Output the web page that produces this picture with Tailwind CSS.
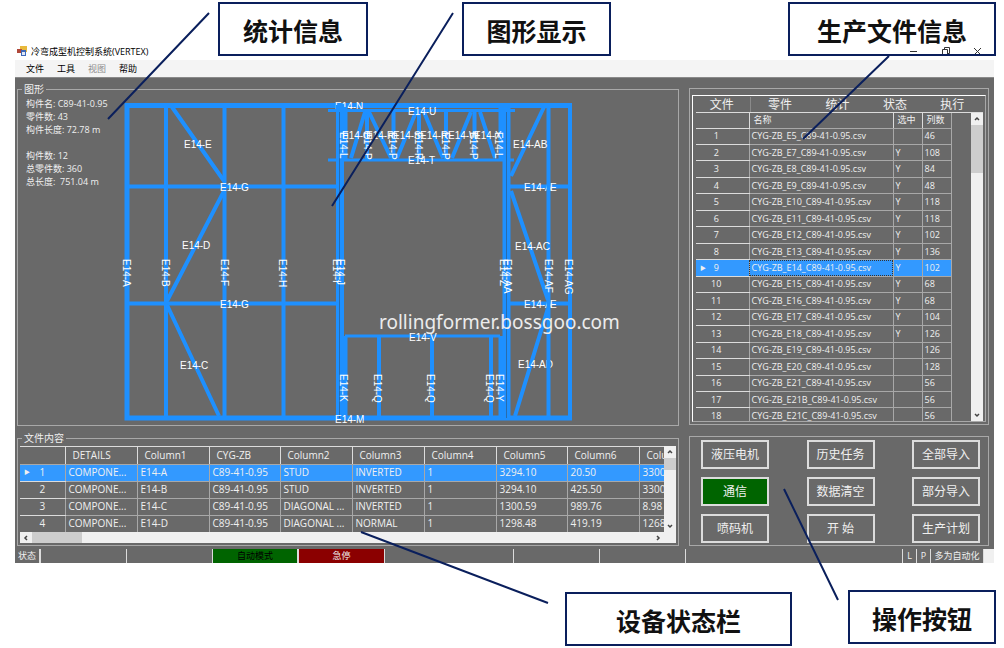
<!DOCTYPE html>
<html lang="zh-CN">
<head>
    <meta charset="UTF-8">
    <title>冷弯成型机控制系统(VERTEX)</title>
    <script src="https://cdn.jsdelivr.net/npm/@tailwindcss/browser@4"></script>
</head>
<body class="bg-white font-['Open_Sans','Noto_Sans_CJK_SC',sans-serif] text-[9px] leading-[13px]">
    <div class="relative min-h-screen overflow-hidden pt-[42px] pl-[15px] pr-[10px]">
        <!-- Window -->
        <div>
            <header class="flex h-[18px] items-center pl-[2px] pr-3">
                <svg class="mr-1 h-[10px] w-[10px]" viewBox="0 0 10 10">
                    <rect x="3" y="0" width="7" height="6" fill="#e8b93c"/>
                    <rect x="0" y="3" width="5" height="4" fill="#b0483a"/>
                    <rect x="4" y="4" width="5" height="6" fill="#3f68b8"/>
                    <rect x="5" y="6" width="3" height="3" fill="#dfe8f8"/>
                </svg>
                <h1 class="text-black">冷弯成型机控制系统(VERTEX)</h1>
                <div class="ml-auto flex gap-[23px]">
                    <button aria-label="最小化"><svg class="h-[9px] w-[9px]" viewBox="0 0 9 9" stroke="#333" fill="none"><path d="M1 4.5h7"/></svg></button>
                    <button aria-label="还原"><svg class="h-[9px] w-[9px]" viewBox="0 0 9 9" stroke="#333" fill="none"><path d="M1.5 2.5h5v6h-5zM3.500 2.500v-2h5v6h-2"/></svg></button>
                    <button aria-label="关闭"><svg class="h-[9px] w-[9px]" viewBox="0 0 9 9" stroke="#333" fill="none"><path d="M1 1l7 7M8 1l-7 7"/></svg></button>
                </div>
            </header>
            <nav class="flex h-[17px] items-center gap-[13px] bg-[#f4f4f4] pl-[11px] text-black">
                <button>文件</button>
                <button>工具</button>
                <button class="text-[#8c8c8c]">视图</button>
                <button>帮助</button>
            </nav>

            <main class="flex items-start gap-[10px] border-t border-[#8a8a8a] bg-[#696969] pt-[5px] pr-[5px] pb-[3px] pl-[2px] text-[#f0f0f0]">
                <!-- Left column -->
                <div class="flex min-w-0 flex-1 flex-col gap-[6px]">
                    <fieldset class="flex border border-[#a8a8a8]">
                        <legend class="ml-1 px-[2px] text-[10px] leading-[12px]">图形</legend>
                        <div class="w-[93px] shrink-0 whitespace-nowrap pt-[2px] pl-2">
                            <p>构件名: C89-41-0.95</p>
                            <p>零件数: 43</p>
                            <p>构件长度: 72.78 m</p>
                            <p class="mt-[13px]">构件数: 12</p>
                            <p>总零件数: 360</p>
                            <p>总长度:&nbsp; 751.04 m</p>
                        </div>
                        <svg class="h-[330px] w-[540px] shrink-0 font-['Liberation_Sans',sans-serif] text-[10px]" viewBox="111 95 540 330" fill="white">
                            <g stroke="#1e90ff" fill="none" stroke-width="4">
                                <path stroke-width="5" d="M124.500 105.500H572M127 105v313M124.500 418H572"/>
                                <path d="M166 105v313M224.500 105v313M283.500 105v313M570 105v313"/>
                                <path d="M129 186.500H337M129 303.500H337M510 186.500H570M510 303.500H570"/>
                                <path d="M172 107L224 181M224 191L167 301M167 305L219 416"/>
                                <path d="M544 107L511 176M511 191L548 300M548 308L515 416"/>
                            </g>
                            <g>
                                <text x="335" y="110">E14-N</text>
                                <text x="524" y="191">E14-A</text>
                                <text x="524" y="308">E14-A</text>
                                <text x="518" y="368">E14-AD</text>
                            </g>
                            <g stroke="#1e90ff" fill="none" stroke-width="4">
                                <path d="M548.500 105v313"/>
                                <path d="M338 105v313M342 105v313M345.500 107v53M345.500 336v82"/>
                                <path d="M504.500 105v313M508.500 105v313M500.500 107v53M500.500 336v82"/>
                                <path stroke-width="3" d="M328 110.500H515M328 160H514M345 336H500"/>
                                <path d="M367 110v50M393.500 110v50M419 110v50M446 110v50M474.500 110v50"/>
                                <path d="M351 158L365 112M369 112L391 158M397 158L416 112M424 112L443 158M452 158L471 112M480 112L495 158"/>
                                <path d="M379 336v82M432 336v82M491 336v82"/>
                                <path stroke="#2a6cab" stroke-width="1" d="M339.500 112v306M506.500 112v306"/>
                            </g>
                            <g id="beam-labels"></g>
                            <text x="379" y="329" fill="#ececec" class="font-['Noto_Sans',sans-serif] text-[19px]">rollingformer.bossgoo.com</text>
                        </svg>
                    </fieldset>

                    <fieldset class="min-w-0 border border-[#a8a8a8] px-[2px] pt-[2px] pb-[2px]">
                        <legend class="ml-[2px] px-[2px] text-[10px] leading-[12px]">文件内容</legend>
                        <div class="flex h-[86px]">
                            <div class="min-w-0 flex-1 overflow-hidden border-t border-[#dcdcdc]">
                                <table class="w-[690px] table-fixed border-collapse text-left text-[10px] leading-[13px]">
                                    <colgroup>
                                        <col class="w-[45px]"><col class="w-[72px]"><col class="w-[72px]"><col class="w-[71px]"><col class="w-[72px]"><col class="w-[72px]"><col class="w-[72px]"><col class="w-[71px]"><col class="w-[72px]"><col class="w-[71px]">
                                    </colgroup>
                                    <thead><tr id="detail-head" class="h-[17px]"></tr></thead>
                                    <tbody id="detail-table"></tbody>
                                </table>
                            </div>
                            <div class="flex w-3 flex-col items-center bg-[#f0f0f0]">
                                <svg class="h-3 w-3" viewBox="0 0 12 12" fill="none" stroke="#444" stroke-width="1.500"><path d="M4 7l2-2 2 2"/></svg>
                                <div class="h-3 w-full bg-[#cdcdcd]"></div>
                                <svg class="mt-auto h-3 w-3" viewBox="0 0 12 12" fill="none" stroke="#444" stroke-width="1.500"><path d="M4 5l2 2 2-2"/></svg>
                            </div>
                        </div>
                        <div class="flex h-[11px] items-center bg-[#f0f0f0] pr-3">
                            <svg class="h-3 w-3" viewBox="0 0 12 12" fill="none" stroke="#444" stroke-width="1.500"><path d="M7 4L5 6l2 2"/></svg>
                            <div class="h-full w-[50px] bg-[#cdcdcd]"></div>
                            <svg class="ml-auto h-3 w-3" viewBox="0 0 12 12" fill="none" stroke="#444" stroke-width="1.500"><path d="M5 4l2 2-2 2"/></svg>
                        </div>
                    </fieldset>
                </div>

                <!-- Right column -->
                <div class="flex w-[300px] shrink-0 flex-col gap-[11px] pt-[5px]">
                    <section class="border border-[#a8a8a8] px-[2px] pt-[6px] pb-[2px]">
                        <div class="border border-t-white border-r-[#a8a8a8] border-b-[#a8a8a8] border-l-white pt-px">
                            <div class="flex pr-[4px] text-[12px] leading-[15px]">
                                <button class="flex-1 border-r border-[#8a8a8a]">文件</button>
                                <button class="flex-1">零件</button>
                                <button class="flex-1">统计</button>
                                <button class="flex-1">状态</button>
                                <button class="flex-1">执行</button>
                            </div>
                            <div class="mr-[2px] ml-[3px] flex h-[309px] border-t border-[#dcdcdc]">
                                <div class="flex-1 overflow-hidden">
                                    <table class="h-[312px] w-[255px] table-fixed border-collapse text-left leading-[12px]">
                                        <colgroup><col class="w-[53px]"><col class="w-[144px]"><col class="w-[29px]"><col class="w-[29px]"></colgroup>
                                        <thead>
                                            <tr class="h-[15px]">
                                                <th class="border-r border-b border-[#dcdcdc]"></th>
                                                <th class="border-r border-b border-[#a8a8a8] border-r-[#dcdcdc] pl-1 font-normal">名称</th>
                                                <th class="border-r border-b border-[#a8a8a8] border-r-[#dcdcdc] pl-1 font-normal">选中</th>
                                                <th class="border-r border-b border-[#a8a8a8] pl-1 font-normal">列数</th>
                                            </tr>
                                        </thead>
                                        <tbody id="file-table"></tbody>
                                    </table>
                                </div>
                                <div class="flex w-3 flex-col bg-[#f0f0f0]">
                                    <svg class="h-3 w-3" viewBox="0 0 12 12" fill="none" stroke="#444" stroke-width="1.500"><path d="M4 7l2-2 2 2"/></svg>
                                    <div class="h-12 w-full bg-[#cdcdcd]"></div>
                                    <svg class="mt-auto h-3 w-3" viewBox="0 0 12 12" fill="none" stroke="#444" stroke-width="1.500"><path d="M4 5l2 2 2-2"/></svg>
                                </div>
                            </div>
                        </div>
                    </section>

                    <section class="grid grid-cols-[68px_68px_68px] justify-between gap-y-[8px] border border-[#a8a8a8] pt-[3px] pr-[8px] pb-[2px] pl-[11px] text-[12px] leading-[24px]">
                        <button class="h-[29px] border-2 border-[#dcdcdc]">液压电机</button>
                        <button class="h-[29px] border-2 border-[#dcdcdc]">历史任务</button>
                        <button class="h-[29px] border-2 border-[#dcdcdc]">全部导入</button>
                        <button class="h-[29px] border-2 border-[#dcdcdc] bg-[#006400]">通信</button>
                        <button class="h-[29px] border-2 border-[#dcdcdc]">数据清空</button>
                        <button class="h-[29px] border-2 border-[#dcdcdc]">部分导入</button>
                        <button class="h-[29px] border-2 border-[#dcdcdc]">喷码机</button>
                        <button class="h-[29px] border-2 border-[#dcdcdc]">开 始</button>
                        <button class="h-[29px] border-2 border-[#dcdcdc]">生产计划</button>
                    </section>
                </div>
            </main>

            <footer class="flex h-[14px] bg-[#696969] text-center leading-[14px] text-[#f0f0f0]">
                <span class="w-[26px] border-r-2 border-[#dcdcdc]">状态</span>
                <span class="w-[86px] border-r border-[#dcdcdc]"></span>
                <span class="w-[86px] border-r border-[#dcdcdc]"></span>
                <span class="w-[86px] border-r-2 border-[#dcdcdc] bg-[#006400] text-black">自动模式</span>
                <span class="w-[86px] border-r border-[#dcdcdc] bg-[#8b0000]">急停</span>
                <span class="w-[129px] border-r border-[#dcdcdc]"></span>
                <span class="w-[86px] border-r border-[#dcdcdc]"></span>
                <span class="w-[86px] border-r border-[#dcdcdc]"></span>
                <span class="flex-1 border-r border-[#dcdcdc]"></span>
                <span class="w-[14px] border-r border-[#dcdcdc]">L</span>
                <span class="w-[14px] border-r border-[#dcdcdc]">P</span>
                <span class="w-[53px] border-r border-[#dcdcdc]">多为自动化</span>
                <span class="w-[10px] bg-[#f0f0f0]"></span>
            </footer>
        </div>

        <!-- Callouts -->
        <svg class="pointer-events-none absolute inset-0 h-full w-full" stroke="#0a1f5c" stroke-width="2">
            <path d="M209 13L108 119M453 13L332 206M889 56L803 139M361 532L548 603M784 489L838 600"/>
        </svg>
        <div class="text-center font-['Noto_Sans_CJK_SC',sans-serif] text-[25px] leading-[52px] font-bold text-[#111]">
            <div class="absolute top-[2px] left-[218px] h-[54px] w-[150px] border-2 border-[#0a1f5c]">统计信息</div>
            <div class="absolute top-[2px] left-[462px] h-[54px] w-[149px] border-2 border-[#0a1f5c]">图形显示</div>
            <div class="absolute top-[2px] left-[788px] h-[54px] w-[208px] border-2 border-[#0a1f5c]">生产文件信息</div>
            <div class="absolute top-[592px] left-[565px] h-[54px] w-[227px] border-2 border-[#0a1f5c]">设备状态栏</div>
            <div class="absolute top-[590px] left-[848px] h-[54px] w-[148px] border-2 border-[#0a1f5c]">操作按钮</div>
        </div>
    </div>

    <script>
        // [name, selected, columns]
        const files = [
            ['E5', '', 46], ['E7', 'Y', 108], ['E8', 'Y', 84], ['E9', 'Y', 48], ['E10', 'Y', 118], ['E11', 'Y', 118],
            ['E12', 'Y', 102], ['E13', 'Y', 136], ['E14', 'Y', 102], ['E15', 'Y', 68], ['E16', 'Y', 68], ['E17', 'Y', 104],
            ['E18', 'Y', 126], ['E19', '', 126], ['E20', '', 128], ['E21', '', 56], ['E21B', '', 56], ['E21C', '', 56]
        ];
        document.getElementById('file-table').innerHTML = files.map(([name, sel, cols], i) => {
            const active = name === 'E14';
            return `
                <tr class="${active ? 'bg-[#3399ff]' : ''}">
                    <td class="relative border-r border-b border-r-[#a8a8a8] border-b-[#dcdcdc] pr-3 text-center">${active ? '<span class="absolute left-1 text-[6px]">▶</span>' : ''}<span>${i + 1}</span></td>
                    <td class="border-r border-b border-[#a8a8a8] pl-[2px] whitespace-nowrap ${active ? 'outline-1 -outline-offset-1 outline-dotted outline-[#333]' : ''}">CYG-ZB_${name}_C89-41-0.95.csv</td>
                    <td class="border-r border-b border-[#a8a8a8] pl-[2px]">${sel}</td>
                    <td class="border-r border-b border-[#a8a8a8] pl-[2px]">${cols}</td>
                </tr>`;
        }).join('');

        const heads = ['', 'DETAILS', 'Column1', 'CYG-ZB', 'Column2', 'Column3', 'Column4', 'Column5', 'Column6', 'Column7'];
        document.getElementById('detail-head').innerHTML = heads.map(h =>
            `<th class="border-r border-b border-b-[#a8a8a8] border-r-[#dcdcdc] pl-[7px] font-normal">${h}</th>`).join('');
        const details = [
            ['E14-A', 'STUD', 'INVERTED', '3294.10', '20.50', '3300.00'],
            ['E14-B', 'STUD', 'INVERTED', '3294.10', '425.50', '3300.00'],
            ['E14-C', 'DIAGONAL ...', 'INVERTED', '1300.59', '989.76', '8.98'],
            ['E14-D', 'DIAGONAL ...', 'NORMAL', '1298.48', '419.19', '1268.00'],
            ['', '', '', '', '', '']
        ];
        document.getElementById('detail-table').innerHTML = details.map((d, i) => {
            const cells = d[0] ? ['COMPONE...', d[0], 'C89-41-0.95', d[1], d[2], '1', d[3], d[4], d[5]] : Array(9).fill('');
            return `
                <tr class="h-[17px] ${i === 0 ? 'bg-[#3399ff]' : ''}">
                    <td class="relative border-r border-b border-r-[#a8a8a8] border-b-[#dcdcdc] text-center">${i === 0 ? '<span class="absolute left-1 text-[6px]">▶</span>' : ''}${d[0] ? i + 1 : ''}</td>
                    ${cells.map(c => `<td class="border-r border-b border-[#a8a8a8] pl-[3px] whitespace-nowrap">${c}</td>`).join('')}
                </tr>`;
        }).join('');

        // [text, x, y, vertical]
        const labels = [
            ['E14-E', 184, 148], ['E14-D', 182, 249], ['E14-C', 180, 369], ['E14-G', 220, 191], ['E14-G', 220, 308],
            ['E14-U', 408, 115], ['E14-T', 408, 164], ['E14-V', 409, 341], ['E14-M', 335, 423],
            ['E14-AB', 513, 148], ['E14-AC', 515, 250], ['E', 550, 191], ['E', 550, 308],
            ['E14-O', 342, 139], ['E14-R', 366, 139], ['E14-S', 393, 139], ['E14-R', 420, 139], ['E14-W', 448, 139], ['E14-X', 474, 139],
            ['E14-L', 340, 132, 1], ['E14-P', 364, 132, 1], ['E14-P', 389, 132, 1], ['E14-P', 415, 132, 1], ['E14-P', 442, 132, 1], ['E14-P', 470, 132, 1], ['E14-L', 495, 132, 1],
            ['E14-A', 123, 259, 1], ['E14-B', 162, 259, 1], ['E14-F', 221, 259, 1], ['E14-H', 279, 259, 1], ['E14-I', 333, 259, 1], ['E14-J', 337, 259, 1],
            ['E14-Z', 500, 259, 1], ['E14-AA', 504, 259, 1], ['E14-AF', 545, 259, 1], ['E14-AG', 565, 259, 1],
            ['E14-K', 340, 374, 1], ['E14-Q', 374, 374, 1], ['E14-Q', 427, 374, 1], ['E14-Q', 486, 374, 1], ['E14-Y', 496, 374, 1]
        ];
        document.getElementById('beam-labels').innerHTML = labels.map(([t, x, y, v]) =>
            `<text transform="translate(${x} ${y}) rotate(${v ? 90 : 0})">${t}</text>`).join('');
    </script>
</body>
</html>
